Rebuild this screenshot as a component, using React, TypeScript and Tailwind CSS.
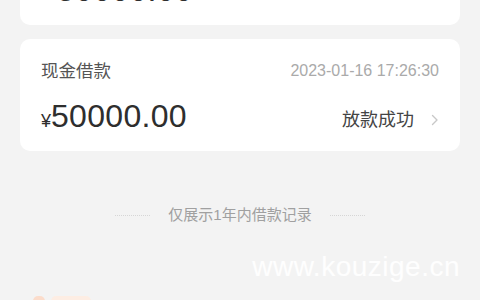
import type { FC } from 'react';

const font = { fontFamily: '"Liberation Sans", "Noto Sans CJK SC", sans-serif' };

const ChevronRight: FC = () => (
  <svg width="8" height="12" viewBox="0 0 8 12" fill="none" className="ml-[17px]">
    <path d="M1.5 1.5 6 6l-4.5 4.5" stroke="#c8c8c8" strokeWidth="1.4" strokeLinecap="round" strokeLinejoin="round" />
  </svg>
);

const LoanCard: FC = () => (
  <div className="mx-[20px] mt-[14px] h-[112px] rounded-[10px] bg-white px-[21px] pt-[22px]">
    <div className="flex items-center justify-between">
      <span className="text-[17.5px] leading-[20px] text-[#555]">现金借款</span>
      <span className="text-[16px] leading-[20px] text-[#aaa]">2023-01-16 17:26:30</span>
    </div>
    <div className="mt-[19px] flex items-end justify-between">
      <div className="flex items-baseline text-[#2e2e2e]">
        <span className="text-[18px] leading-none">¥</span>
        <span className="text-[32px] leading-none tracking-[0.3px]">50000.00</span>
      </div>
      <div className="flex items-center pb-[1px]">
        <span className="text-[18px] leading-[22px] text-[#444]">放款成功</span>
        <ChevronRight />
      </div>
    </div>
  </div>
);

export default function App() {
  return (
    <div className="relative h-[300px] w-[480px] overflow-hidden bg-[#f3f3f3]" style={font}>
      <div className="mx-[20px] flex h-[25px] items-end overflow-hidden rounded-b-[10px] bg-white pb-[19px] pl-[37px]">
        <span className="text-[32px] leading-none tracking-[0.3px] text-[#2e2e2e]">50000.00</span>
      </div>
      <LoanCard />
      <div className="mt-[54px] flex items-center justify-center">
        <div className="w-[35px] border-t border-dotted border-[#d6d6d6]" />
        <span className="mx-[18px] text-[15px] leading-[20px] text-[#a0a0a0]">仅展示1年内借款记录</span>
        <div className="w-[35px] border-t border-dotted border-[#d6d6d6]" />
      </div>
      <div className="mt-[27px] flex justify-end pr-[20px]">
        <span className="text-[28px] leading-[30px] tracking-[0.5px] text-white/90">www.kouzige.cn</span>
      </div>
      <div className="absolute bottom-[-6px] left-[33px] flex gap-[6px]">
        <div className="h-[10px] w-[12px] rounded-full bg-[#fbdccb]" />
        <div className="h-[10px] w-[40px] rounded-full bg-[#fdede3]" />
      </div>
    </div>
  );
}
